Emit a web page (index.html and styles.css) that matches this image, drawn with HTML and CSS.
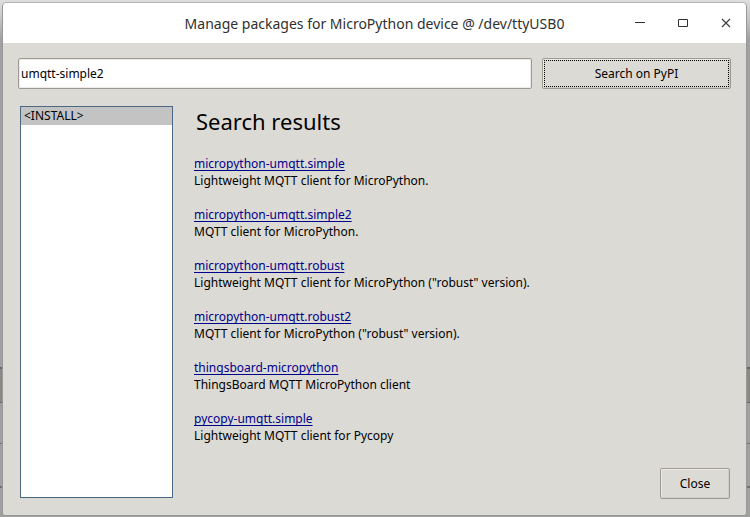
FILE: index.html
```html
<!DOCTYPE html>
<html lang="en">
<head>
<meta charset="utf-8">
<title>Manage packages for MicroPython device @ /dev/ttyUSB0</title>
<link rel="stylesheet" href="styles.css">
</head>
<body>
<main class="window">
  <header class="titlebar">
    <h1 class="title">Manage packages for MicroPython device @ /dev/ttyUSB0</h1>
    <div class="controls">
      <button class="control" type="button" aria-label="Minimize"><svg width="12" height="12" viewBox="0 0 12 12"><path d="M1 5.5h10" stroke="#303030"/></svg></button>
      <button class="control" type="button" aria-label="Maximize"><svg width="12" height="12" viewBox="0 0 12 12"><path d="M1.5 2.5h9v7h-9z" fill="none" stroke="#303030"/></svg></button>
      <button class="control" type="button" aria-label="Close window"><svg width="12" height="12" viewBox="0 0 12 12"><path d="M2 2l8 8M10 2l-8 8" stroke="#404040" stroke-width="1.2"/></svg></button>
    </div>
  </header>
  <form class="search">
    <input class="query" type="text" aria-label="Package name" value="umqtt-simple2">
    <button class="button search-button" type="button"><span class="focus-ring">Search on PyPI</span></button>
  </form>
  <div class="content">
    <ul class="packages">
      <li class="package">&lt;INSTALL&gt;</li>
    </ul>
    <section class="results">
      <h2 class="heading">Search results</h2>
      <dl class="list">
        <div class="result"><dt><a class="link" href="#">micropython-umqtt.simple</a></dt><dd>Lightweight MQTT client for MicroPython.</dd></div>
        <div class="result"><dt><a class="link" href="#">micropython-umqtt.simple2</a></dt><dd>MQTT client for MicroPython.</dd></div>
        <div class="result"><dt><a class="link" href="#">micropython-umqtt.robust</a></dt><dd>Lightweight MQTT client for MicroPython ("robust" version).</dd></div>
        <div class="result"><dt><a class="link" href="#">micropython-umqtt.robust2</a></dt><dd>MQTT client for MicroPython ("robust" version).</dd></div>
        <div class="result"><dt><a class="link" href="#">thingsboard-micropython</a></dt><dd>ThingsBoard MQTT MicroPython client</dd></div>
        <div class="result"><dt><a class="link" href="#">pycopy-umqtt.simple</a></dt><dd>Lightweight MQTT client for Pycopy</dd></div>
      </dl>
      <button class="button close-button" type="button">Close</button>
    </section>
  </div>
</main>
</body>
</html>
```
FILE: styles.css
```css
* {
  box-sizing: border-box;
}

body {
  margin: 0;
  min-height: 100vh;
  padding: 2px 3px 1px 2px;
  display: flex;
  font: 12px/17px "Noto Sans", sans-serif;
  color: #000;
  background:
    linear-gradient(#686868, #686868) 0 367px / 100% 2px no-repeat,
    linear-gradient(#686868, #686868) 0 402px / 100% 1px no-repeat,
    linear-gradient(#727272, #727272) 0 443px / 100% 1px no-repeat,
    linear-gradient(#727272, #727272) 0 486px / 100% 2px no-repeat,
    linear-gradient(#8b8984, #8b8984) 0 368px / 100% 34px no-repeat,
    linear-gradient(#dedede, #cacaca 16px, #a0a0a0 40px, #a0a0a0);
}

.window {
  flex: 1;
  display: flex;
  flex-direction: column;
  border: 1px solid #989898;
  border-top-color: #b4b4b4;
  border-radius: 5px 5px 3px 3px;
  background: #dcdad5;
  overflow: hidden;
}

.titlebar {
  height: 40px;
  padding: 0 12px 0 114px;
  display: flex;
  align-items: center;
  background: #fff;
}

.title {
  flex: 1;
  margin: 0;
  text-align: center;
  font-size: 14px;
  font-weight: 400;
  color: #303030;
}

.controls {
  display: flex;
  gap: 27px;
}

.control {
  width: 16px;
  height: 16px;
  padding: 2px;
  border: 0;
  background: none;
}

.control svg {
  display: block;
}

.search {
  display: flex;
  gap: 10px;
  padding: 15px 15px 17px;
}

.query {
  flex: 1;
  min-width: 0;
  height: 31px;
  padding: 0 2px;
  border: 1px solid #9e9a91;
  border-radius: 2px;
  background: #fff;
  box-shadow: inset 0 0 0 1px #eeebe7;
  font: inherit;
  color: inherit;
}

.button {
  height: 31px;
  border: 1px solid #9e9a91;
  border-radius: 2px;
  background: #dcdad5;
  box-shadow: inset 1px 1px #eeebe7, inset -1px -1px #cfcdc8;
  font: inherit;
  color: inherit;
}

.search-button {
  width: 189px;
  padding: 1px;
}

.focus-ring {
  height: 100%;
  display: flex;
  align-items: center;
  justify-content: center;
  border: 1px dotted #000;
}

.content {
  flex: 1;
  display: flex;
  gap: 21px;
  padding: 0 16px 16px 17px;
}

.packages {
  width: 153px;
  margin: 0 0 1px;
  padding: 1px;
  border: 1px solid #4a6984;
  background: #fff;
  list-style: none;
}

.package {
  margin: -1px -1px 0;
  padding: 0 3px 1px;
  background: #c3c3c3;
}

.results {
  flex: 1;
  display: flex;
  flex-direction: column;
}

.heading {
  margin: 0 0 19px;
  padding-left: 2px;
  font-size: 22px;
  line-height: 30px;
  font-weight: 400;
}

.list {
  margin: 0;
  display: grid;
  gap: 17px;
}

.result dd {
  margin: 0;
}

.link {
  color: #00008b;
  text-decoration: underline;
  text-decoration-skip-ink: none;
  text-underline-offset: 2px;
}

.close-button {
  width: 70px;
  margin-top: auto;
  align-self: flex-end;
}
```
